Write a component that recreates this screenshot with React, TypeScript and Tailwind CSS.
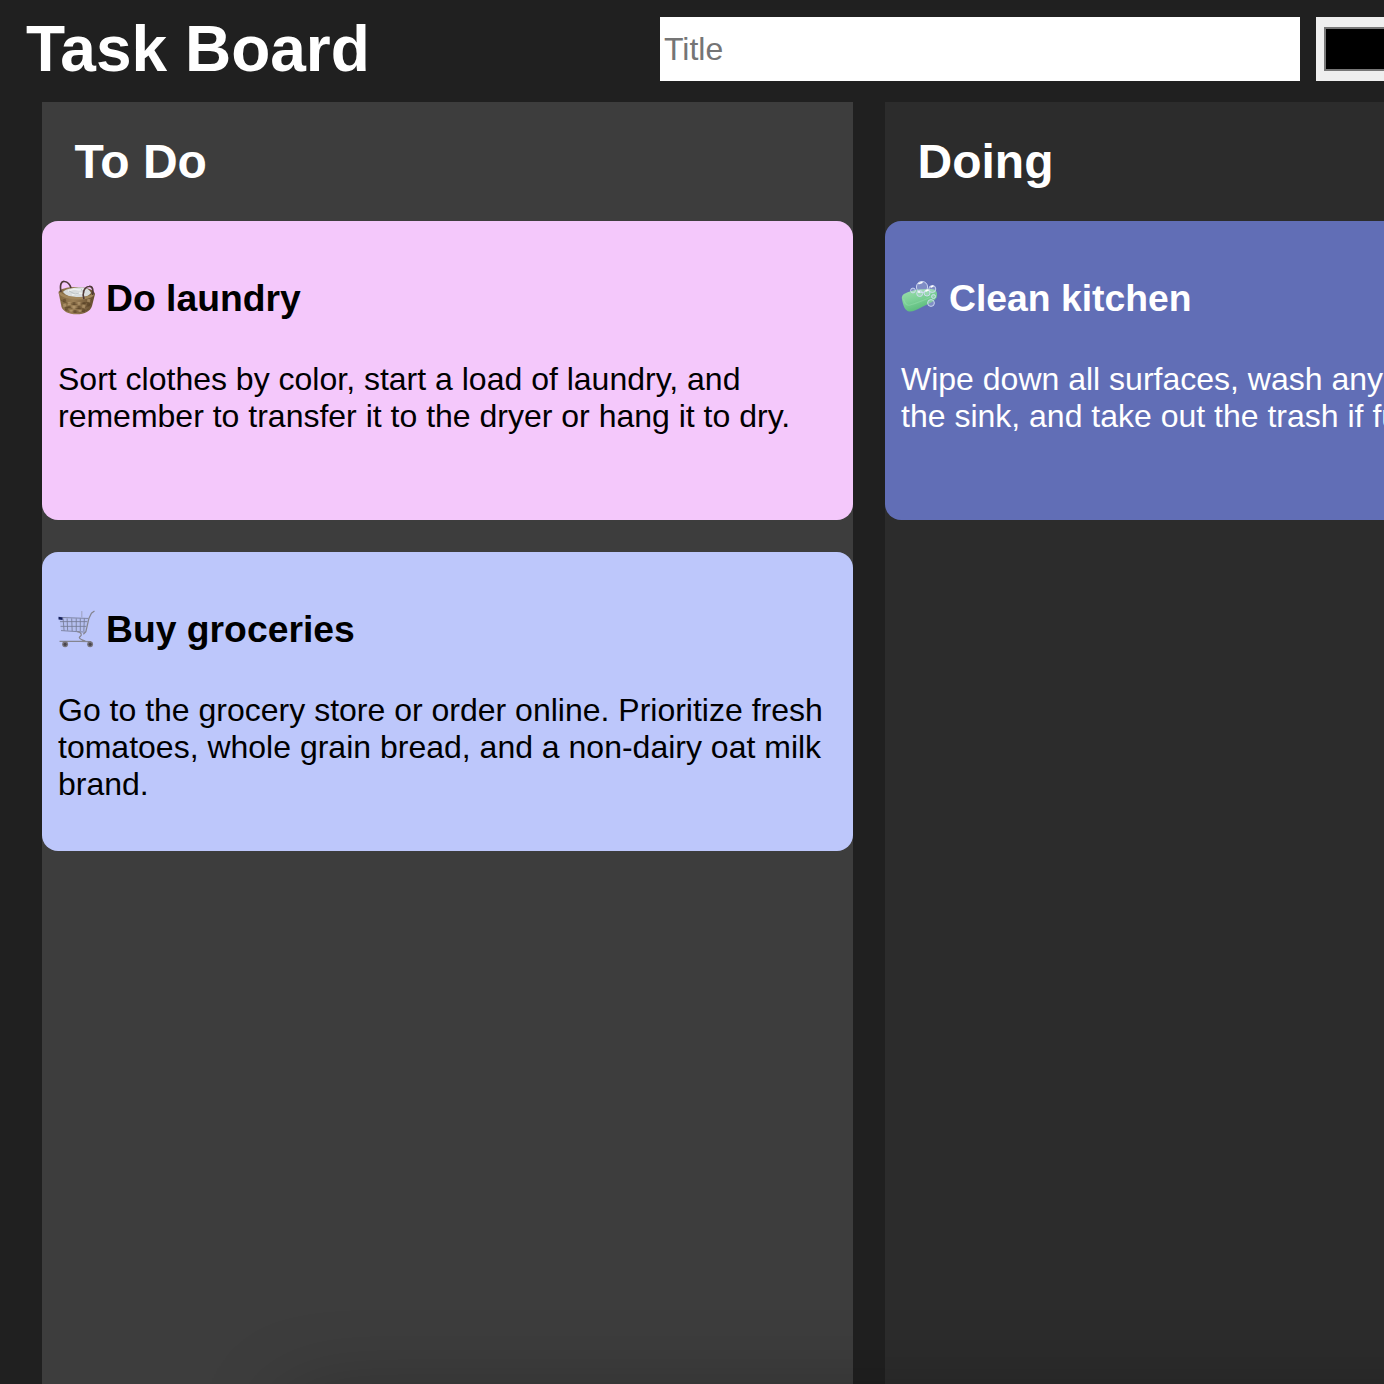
import type { ReactNode } from "react";

function Basket() {
  return (
    <svg viewBox="0 0 38 38" className="mb-px h-[38px] w-[38px] shrink-0" fill="none">
      <defs>
        <linearGradient id="wicker" x1="0" x2="1">
          <stop offset="0" stopColor="#80673f" />
          <stop offset="0.4" stopColor="#9b7f56" />
          <stop offset="1" stopColor="#624a2c" />
        </linearGradient>
      </defs>
      <path d="M.5 13C1.500 10 9 8 18 8C28 8 36 10.500 37 15L34 27C32.500 32 27 35.300 18.500 35.300C10 35.300 5 32 3.500 28Z" fill="url(#wicker)" />
      <path d="M3 21C10 27 28 27 34 20M4.500 26C11 31 27 31 33 25M7 30.500C12 34 26 34 30.500 30" stroke="#5a4327" strokeOpacity=".55" strokeWidth="1" />
      <path d="M6 20l1 3M11 27l.5 2M16 23v3M21 27v3M26 23v2M31 24l-1 3M8 28l1 3M17 31v3M26 30l-1 3" stroke="#4f3a20" strokeOpacity=".5" strokeWidth="3" />
      <path d="M11 23l.5 3M16 27v3M21 23v3M26 26l-.5 3M31 20l-.5 3M6 25l1 3M13 31v2M22 31v2" stroke="#bea276" strokeOpacity=".6" strokeWidth="3" />
      <path d="M5 13C7 10 13 9.500 19 8.500C26 7.500 32 10 33 14C30 18 26 18 20 18C13 18 8 17 5 13Z" fill="#d8dcdd" />
      <path d="M10 12l6-2 5 1 5-1M14 16l7-2 6 1" stroke="#edf0ef" strokeWidth="1.500" />
      <path d="M11 12l6 3 4-1M23 10l3 4" stroke="#b3babc" strokeWidth=".8" />
      <path d="M1.500 14c5 6 29 7.500 34 1" stroke="#a1865b" strokeWidth="2.500" />
      <path d="M3 13C1.500 5 3.500 2 6.500 2.500C10 3 12 5.500 13 9M26 20C24 14 26 8 31 7.500C35 7 35.500 12 34.500 16" stroke="#503a38" strokeWidth="1.700" />
    </svg>
  );
}

function Cart() {
  return (
    <svg viewBox="0 0 37.500 36" preserveAspectRatio="none" className="mb-px h-[38px] w-[38px] shrink-0" fill="none">
      <path d="M1 7L30 8L27 21L3 19Z" fill="#9298b5" fillOpacity=".16" />
      <path d="M1 7L30 8M2 11h27M2.500 15.500h25.500M3 19.500l24 1.500M5 8l1 11.500M9 8l.5 11.500M13.500 8l.5 12M18 8v12M22 8v12M26 8l-.5 12" stroke="#747a94" strokeOpacity=".9" strokeWidth=".9" />
      <path d="M36 1L33 3L30.500 8L27.500 20.500L25 23M19 20.500C23 21 24 23.500 22 25C19 27 24 28 27 29.700M1.500 29.700h20l11 .3" stroke="#85858f" strokeWidth="1.200" />
      <path d="M23.500 1v6" stroke="#9699b2" strokeWidth=".8" />
      <path d="M.5 6.500l4 .5v2.500l-4-.5Z" fill="#15205d" />
      <circle cx="7" cy="32.500" r="2.900" fill="#77747c" />
      <circle cx="31.700" cy="32.500" r="2.900" fill="#77747c" />
      <circle cx="7" cy="32.500" r="1.500" fill="#48444b" />
      <circle cx="31.700" cy="32.500" r="1.500" fill="#48444b" />
    </svg>
  );
}

function Soap() {
  return (
    <svg viewBox="0 0 38 38" className="mb-px h-[38px] w-[38px] shrink-0" fill="none">
      <defs>
        <linearGradient id="soap" x1="0" y1="0" x2=".5" y2="1">
          <stop offset="0" stopColor="#a0dfaf" />
          <stop offset=".55" stopColor="#7acf95" />
          <stop offset="1" stopColor="#56b878" />
        </linearGradient>
      </defs>
      <path d="M.8 19C.8 15 5 14 9 12.500C16 10 24 10 30 10C35 10 36.500 13 36 17C35.500 22 28 24.500 21 28C16 31 11 33 8 32.500C4 31.500 2 27 .8 19Z" fill="url(#soap)" />
      <path d="M2.500 20C4 25 6 27 9 26C16 24 28 19 34 16" stroke="#9de0b3" strokeOpacity=".4" strokeWidth="1.200" />
      <g stroke="#d1dcf4" strokeOpacity=".9" fill="#dceaf5" fillOpacity=".25" strokeWidth="1">
        <circle cx="21" cy="8" r="5.600" />
        <circle cx="31.300" cy="10" r="3.500" />
        <circle cx="12" cy="11.500" r="2.400" />
        <circle cx="18.700" cy="14.500" r="3" />
        <circle cx="26" cy="14" r="3" />
        <circle cx="30" cy="24" r="3.400" />
        <circle cx="32.500" cy="17.500" r="2" />
      </g>
      <path d="M18 4.500l3-1M30 8l2-1M25 12l2-1M17.500 13h1" stroke="white" strokeWidth="1.500" strokeLinecap="round" />
    </svg>
  );
}

function Card({ icon, title, className, children }: { icon: ReactNode; title: string; className: string; children: ReactNode }) {
  return (
    <article className={`h-[299px] shrink-0 rounded-[16px] px-4 pt-[56px] ${className}`}>
      <h3 className="flex h-[43px] items-center gap-[10px] text-[37.3px] leading-[43px] font-bold whitespace-nowrap">
        {icon}
        <span>{title}</span>
      </h3>
      <p className="mt-[41px] text-[32px] leading-[37px]">{children}</p>
    </article>
  );
}

function Column({ title, className, children }: { title: string; className: string; children: ReactNode }) {
  return (
    <section className={`flex w-[811px] shrink-0 flex-col gap-8 ${className}`}>
      <h2 className="-mb-8 h-[119px] pt-8 pl-[32.5px] text-[48px] leading-[55px] font-bold">{title}</h2>
      {children}
    </section>
  );
}

export default function App() {
  return (
    <div className="relative flex h-[1384px] w-full flex-col overflow-hidden bg-[#202020] font-['Liberation_Sans',Arial,sans-serif] text-white">
      <header className="flex h-[102px] shrink-0 items-start pt-[17px] pl-[26px]">
        <h1 className="w-[634px] shrink-0 text-[64px] leading-[64px] font-bold">Task Board</h1>
        <input
          aria-label="Title"
          placeholder="Title"
          className="h-[64px] w-[640px] shrink-0 bg-white px-1 text-[32px] text-black outline-none placeholder:text-[#757575]"
        />
        <button aria-label="Card color" className="ml-4 h-[64px] w-[100px] shrink-0 bg-[#efefef] py-[10px] pl-2">
          <span className="block h-full w-full border-2 border-[#777777] bg-black" />
        </button>
      </header>
      <main className="flex min-h-0 flex-1 gap-8 pl-[42px]">
        <Column title="To Do" className="bg-[#3d3d3d]">
          <Card icon={<Basket />} title="Do laundry" className="bg-[#f4c8fb] text-black">
            Sort clothes by color, start a load of laundry, and remember to transfer it to the dryer or hang it to dry.
          </Card>
          <Card icon={<Cart />} title="Buy groceries" className="bg-[#bdc7fb] text-black">
            Go to the grocery store or order online. Prioritize fresh tomatoes, whole grain bread, and a non-dairy oat milk brand.
          </Card>
        </Column>
        <Column title="Doing" className="bg-[#2c2c2c]">
          <Card icon={<Soap />} title="Clean kitchen" className="bg-[#616eb6] text-white">
            Wipe down all surfaces, wash any dishes left in
            <br />
            the sink, and take out the trash if full.
          </Card>
        </Column>
      </main>
      <div className="pointer-events-none absolute top-[1404px] left-[290px] h-[200px] w-[1400px] shadow-[0_0_90px_rgba(0,0,0,0.32)]" />
    </div>
  );
}
